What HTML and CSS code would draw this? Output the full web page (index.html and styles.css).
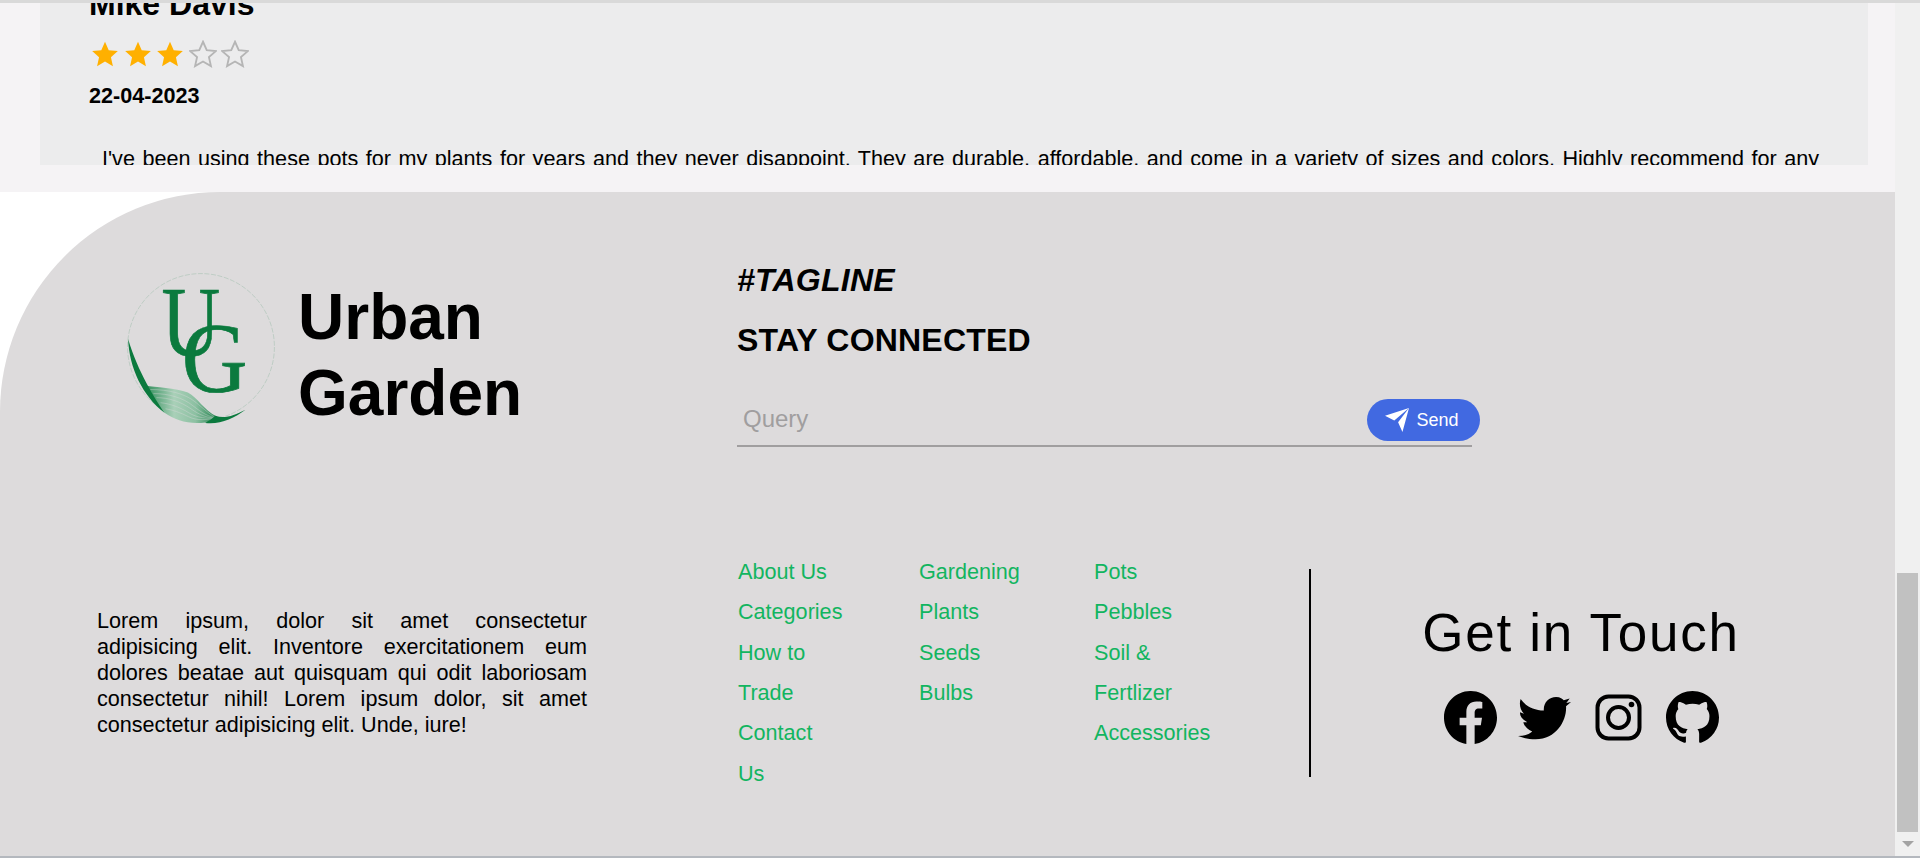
FILE: index.html
```html
<!DOCTYPE html>
<html lang="en">
  <head>
    <meta charset="UTF-8" />
    <meta name="viewport" content="width=device-width, initial-scale=1.0" />
    <title>Urban Garden</title>
    <link rel="stylesheet" href="styles.css">
  </head>
  <body>
    <div class="window">
      <div class="page">
        <section class="reviews">
          <article class="review-card">
            <h3 class="review-name">Mike Davis</h3>
            <div class="stars">
              <svg class="star star-on" viewBox="0 0 24 24"><path d="M12 1.5l3.2 7.2 7.8.8-5.9 5.2 1.7 7.7L12 18.4l-6.8 4 1.7-7.7L1 9.5l7.8-.8z"/></svg>
              <svg class="star star-on" viewBox="0 0 24 24"><path d="M12 1.5l3.2 7.2 7.8.8-5.9 5.2 1.7 7.7L12 18.4l-6.8 4 1.7-7.7L1 9.5l7.8-.8z"/></svg>
              <svg class="star star-on" viewBox="0 0 24 24"><path d="M12 1.5l3.2 7.2 7.8.8-5.9 5.2 1.7 7.7L12 18.4l-6.8 4 1.7-7.7L1 9.5l7.8-.8z"/></svg>
              <svg class="star star-off" viewBox="0 0 24 24"><path d="M12 1.5l3.2 7.2 7.8.8-5.9 5.2 1.7 7.7L12 18.4l-6.8 4 1.7-7.7L1 9.5l7.8-.8z"/></svg>
              <svg class="star star-off" viewBox="0 0 24 24"><path d="M12 1.5l3.2 7.2 7.8.8-5.9 5.2 1.7 7.7L12 18.4l-6.8 4 1.7-7.7L1 9.5l7.8-.8z"/></svg>
            </div>
            <p class="review-date">22-04-2023</p>
            <p class="review-text">I've been using these pots for my plants for years and they never disappoint. They are durable, affordable, and come in a variety of sizes and colors. Highly recommend for any gardening enthusiast looking for something that lasts through every season.</p>
          </article>
        </section>

        <div class="footer-back">
          <footer class="footer">
            <div class="footer-top">
              <div class="brand">
                <svg class="logo" viewBox="0 0 160 160">
                  <defs>
                    <linearGradient id="swirl" x1="0" y1="0" x2="1" y2="0">
                      <stop offset="0" stop-color="#2f8d5a" />
                      <stop offset="0.4" stop-color="#a9d0b8" />
                      <stop offset="0.7" stop-color="#8cc0a2" />
                      <stop offset="1" stop-color="#1c8149" />
                    </linearGradient>
                  </defs>
                  <circle cx="80" cy="80" r="72.5" fill="none" stroke="#0b7a3e" stroke-width="0.5" stroke-opacity="0.3" stroke-dasharray="5 1.5" />
                  <path d="M25 118C35 120 55 120 67 125C77 130 82 142 96 149C92 153 86 155 80 155C66 156 54 152 44 145C35 137 29 128 25 118Z" fill="url(#swirl)" />
                  <g fill="none" stroke="#dddbdc" stroke-width="0.5" stroke-opacity="0.75">
                    <path d="M30 122C48 122 64 126 74 134S90 148 96 150" />
                    <path d="M33 126C48 126 62 130 72 138S88 149 96 150" />
                    <path d="M36 130C48 130 60 134 70 141S86 150 96 150" />
                    <path d="M40 135C50 136 60 140 68 145S86 151 96 150" />
                    <path d="M45 141C52 142 60 145 68 149S86 152 96 150" />
                  </g>
                  <path d="M8 72C9 100 22 128 44 145C34 130 18 105 8 72Z" fill="#0b7a3e" />
                  <path d="M84 155C98 157 112 151 124 142C112 148 104 151 94 148C91 151 88 153 84 155Z" fill="#0b7a3e" />
                  <text class="logo-letter" x="41" y="88" textLength="58" lengthAdjust="spacingAndGlyphs">U</text>
                  <text class="logo-letter" x="61" y="123" textLength="65" lengthAdjust="spacingAndGlyphs">G</text>
                </svg>
                <h2 class="brand-name">Urban<br>Garden</h2>
              </div>
              <div class="connect">
                <h3 class="tagline">#TAGLINE</h3>
                <h3 class="stay">STAY CONNECTED</h3>
                <form class="query-form">
                  <input class="query-input" type="text" placeholder="Query" />
                  <button class="send-btn" type="button">
                    <svg class="send-icon" viewBox="0 0 22 22"><path d="M22 0L0 7l8.5 4.5L22 0 12 13l4 9z" fill="#fff"/></svg>
                    Send
                  </button>
                </form>
              </div>
            </div>

            <div class="footer-bottom">
              <p class="about">Lorem ipsum, dolor sit amet consectetur adipisicing elit. Inventore exercitationem eum dolores beatae aut quisquam qui odit laboriosam consectetur nihil! Lorem ipsum dolor, sit amet consectetur adipisicing elit. Unde, iure!</p>
              <div class="links">
                <ul>
                  <li>About Us</li>
                  <li>Categories</li>
                  <li>How to Trade</li>
                  <li>Contact Us</li>
                </ul>
                <ul>
                  <li>Gardening</li>
                  <li>Plants</li>
                  <li>Seeds</li>
                  <li>Bulbs</li>
                </ul>
                <ul>
                  <li>Pots</li>
                  <li>Pebbles</li>
                  <li>Soil &amp; Fertlizer</li>
                  <li>Accessories</li>
                </ul>
              </div>
              <div class="touch">
                <h2 class="touch-title">Get in Touch</h2>
                <div class="socials">
                  <svg class="social" viewBox="0 0 16 16"><path d="M16 8.049c0-4.446-3.582-8.05-8-8.05C3.58 0-.002 3.603-.002 8.05c0 4.017 2.926 7.347 6.75 7.951v-5.625h-2.03V8.05H6.75V6.275c0-2.017 1.195-3.131 3.022-3.131.876 0 1.791.157 1.791.157v1.98h-1.009c-.993 0-1.303.621-1.303 1.258v1.51h2.218l-.354 2.326H9.25V16c3.824-.604 6.75-3.934 6.75-7.951z"/></svg>
                  <svg class="social" viewBox="22 14 160 160"><path d="M30 38C45 60 70 72 100 73C98 50 115 32 137 32C150 32 157 38 160 42L178 37L168 50L182 47L167 60C170 100 140 160 75 160C55 160 38 156 22 150C40 150 55 145 65 136C50 130 42 122 38 108L50 108C35 100 27 90 28 78L40 83C28 70 25 52 30 38Z"/></svg>
                  <svg class="social" viewBox="0 0 53 53"><rect x="5.5" y="5.5" width="42" height="42" rx="11" fill="none" stroke="#000" stroke-width="4"/><circle cx="26.5" cy="26.5" r="10.5" fill="none" stroke="#000" stroke-width="4"/><circle cx="39.5" cy="13.5" r="2.8"/></svg>
                  <svg class="social" viewBox="0 0 16 16"><path d="M8 0C3.58 0 0 3.58 0 8c0 3.54 2.29 6.53 5.47 7.59.4.07.55-.17.55-.38 0-.19-.01-.82-.01-1.49-2.01.37-2.53-.49-2.69-.94-.09-.23-.48-.94-.82-1.13-.28-.15-.68-.52-.01-.53.63-.01 1.08.58 1.23.82.72 1.21 1.87.87 2.33.66.07-.52.28-.87.51-1.07-1.78-.2-3.64-.89-3.64-3.95 0-.87.31-1.59.82-2.15-.08-.2-.36-1.02.08-2.12 0 0 .67-.21 2.2.82.64-.18 1.32-.27 2-.27.68 0 1.36.09 2 .27 1.53-1.04 2.2-.82 2.2-.82.44 1.1.16 1.92.08 2.12.51.56.82 1.27.82 2.15 0 3.07-1.87 3.75-3.65 3.95.29.25.54.73.54 1.48 0 1.07-.01 1.93-.01 2.2 0 .21.15.46.55.38A8.012 8.012 0 0 0 16 8c0-4.42-3.58-8-8-8z"/></svg>
                </div>
              </div>
            </div>
          </footer>
        </div>
      </div>

      <div class="scrollbar">
        <div class="scroll-thumb"></div>
        <div class="scroll-arrow"></div>
      </div>
    </div>
  </body>
</html>
```

FILE: styles.css
```css
* {
  box-sizing: border-box;
}

html,
body {
  height: 100%;
}

body {
  margin: 0;
  overflow: hidden;
  font-family: "Liberation Sans", Arial, sans-serif;
  color: #000;
  background-color: #fff;
}

.window {
  display: flex;
  height: 858px;
  border-top: 3px solid #d9d9d9;
  border-bottom: 2px solid #b4b8be;
}

.page {
  flex: 1;
  min-width: 0;
  background-color: #fff;
}

/* reviews */
.reviews {
  height: 189px;
  padding: 0 27px 27px 40px;
  background-color: #f5f3f5;
}

.review-card {
  height: 162px;
  padding: 0 49px;
  overflow: hidden;
  background-color: #ececed;
}

.review-name {
  margin: -15px 0 0;
  font-size: 32px;
  line-height: 32px;
}

.stars {
  display: flex;
  gap: 4.5px;
  margin-top: 20px;
  margin-left: 2px;
}

.star {
  width: 28px;
  height: 28px;
}

.star-on {
  fill: #ffb000;
}

.star-off {
  fill: none;
  stroke: #b5b5b5;
  stroke-width: 1.6;
}

.review-date {
  margin: 15px 0 0;
  font-size: 21.6px;
  font-weight: bold;
}

.review-text {
  margin: 37px 0 0;
  padding: 0 0 0 13px;
  font-size: 21.6px;
  line-height: 26px;
  text-align: justify;
}

/* footer */
.footer-back {
  background-color: #fff;
}

.footer {
  height: 664px;
  padding: 70px 0 0 97px;
  background-color: #dddbdc;
  border-top-left-radius: 220px 220px;
}

.footer-top {
  display: flex;
  height: 278px;
}

.brand {
  display: flex;
  align-items: flex-start;
  gap: 16px;
  width: 640px;
  height: 160px;
  padding-left: 23px;
}

.logo {
  flex-shrink: 0;
  width: 162px;
  height: 162px;
  margin-top: 4px;
}

.logo-letter {
  font-family: "Liberation Serif", serif;
  font-size: 98px;
  fill: #0b7a3e;
  stroke: #0b7a3e;
  stroke-width: 0.7;
}

.brand-name {
  margin: 17px 0 0;
  font-size: 64px;
  line-height: 76px;
}

.connect {
  width: 740px;
}

.tagline {
  margin: 0;
  font-size: 32px;
  line-height: 37px;
  font-style: italic;
  letter-spacing: 0.25px;
}

.stay {
  margin: 23px 0 0;
  font-size: 32px;
  line-height: 37px;
  letter-spacing: 0.2px;
}

.query-form {
  position: relative;
  margin-top: 33px;
  width: 735px;
}

.query-input {
  display: block;
  width: 100%;
  height: 55px;
  padding: 0 6px;
  border: none;
  border-bottom: 2px solid #a09e9f;
  background: transparent;
  font-family: inherit;
  font-size: 24px;
}

.query-input::placeholder {
  color: #a09e9f;
}

.send-btn {
  position: absolute;
  top: 7px;
  right: -8px;
  display: flex;
  align-items: center;
  justify-content: center;
  gap: 7px;
  width: 113px;
  height: 42px;
  padding: 0 3px 0 0;
  border: none;
  border-radius: 21px;
  background-color: #4169e1;
  color: #fff;
  font-family: inherit;
  font-size: 18px;
}

.send-icon {
  width: 24px;
  height: 24px;
}

.footer-bottom {
  display: flex;
  align-items: center;
  height: 266px;
}

.about {
  width: 490px;
  margin: 0 151px 0 0;
  font-size: 21.6px;
  line-height: 26px;
  text-align: justify;
}

.links {
  display: grid;
  grid-template-columns: 181px 175px 215px;
  align-items: start;
  width: 571px;
}

.links ul {
  margin: 0;
  padding: 0;
  list-style: none;
}

.links li {
  max-width: 104px;
  font-size: 21.6px;
  line-height: 40.4px;
  color: #12b560;
}

.touch {
  display: flex;
  flex-direction: column;
  align-items: center;
  width: 542px;
  height: 208px;
  justify-content: center;
  border-left: 2px solid #000;
}

.touch-title {
  margin: 0;
  font-size: 53px;
  line-height: 62px;
  font-weight: normal;
  letter-spacing: 1.75px;
}

.socials {
  display: flex;
  align-items: center;
  gap: 21px;
  margin-top: 27px;
}

.social {
  width: 53px;
  height: 53px;
}

/* fake browser scrollbar */
.scrollbar {
  display: flex;
  flex-direction: column;
  align-items: center;
  width: 25px;
  background-color: #f0f0f0;
}

.scroll-thumb {
  width: 21px;
  height: 259px;
  margin-top: 570px;
  background-color: #c1c1c1;
}

.scroll-arrow {
  margin-top: 9px;
  border-left: 6px solid transparent;
  border-right: 6px solid transparent;
  border-top: 6px solid #a3a3a3;
}
```
